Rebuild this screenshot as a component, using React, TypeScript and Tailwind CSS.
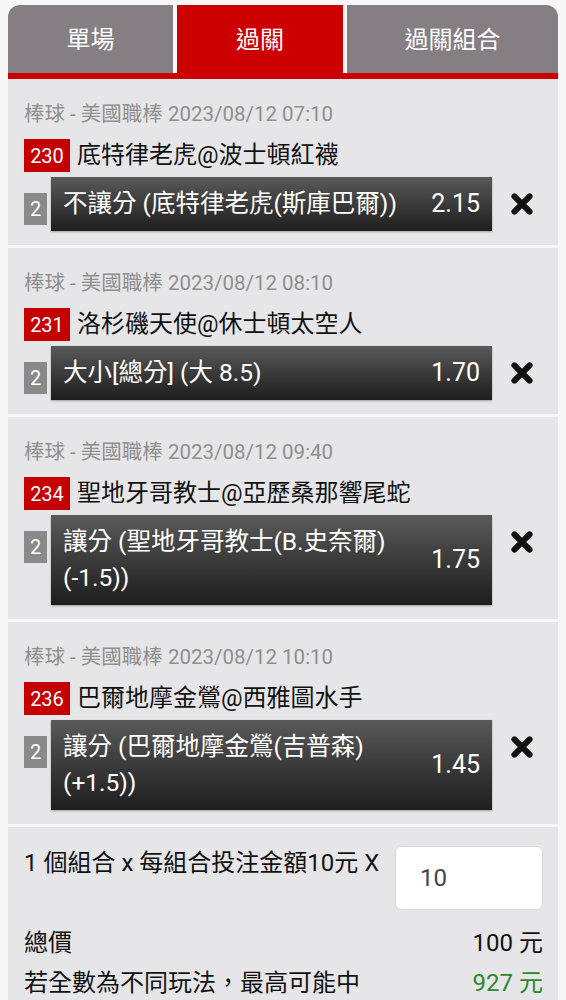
import React from "react";

type Bet = {
  meta: string;
  no: string;
  title: string;
  lines: string[];
  odds: string;
};

const bets: Bet[] = [
  {
    meta: "棒球 - 美國職棒 2023/08/12 07:10",
    no: "230",
    title: "底特律老虎@波士頓紅襪",
    lines: ["不讓分 (底特律老虎(斯庫巴爾))"],
    odds: "2.15",
  },
  {
    meta: "棒球 - 美國職棒 2023/08/12 08:10",
    no: "231",
    title: "洛杉磯天使@休士頓太空人",
    lines: ["大小[總分] (大 8.5)"],
    odds: "1.70",
  },
  {
    meta: "棒球 - 美國職棒 2023/08/12 09:40",
    no: "234",
    title: "聖地牙哥教士@亞歷桑那響尾蛇",
    lines: ["讓分 (聖地牙哥教士(B.史奈爾)", "(-1.5))"],
    odds: "1.75",
  },
  {
    meta: "棒球 - 美國職棒 2023/08/12 10:10",
    no: "236",
    title: "巴爾地摩金鶯@西雅圖水手",
    lines: ["讓分 (巴爾地摩金鶯(吉普森)", "(+1.5))"],
    odds: "1.45",
  },
];

function XIcon() {
  return (
    <svg width="26" height="26" viewBox="0 0 24 24" aria-hidden="true">
      <path
        d="M5 5 L19 19 M19 5 L5 19"
        stroke="#111"
        strokeWidth="5.5"
        strokeLinecap="round"
        fill="none"
      />
    </svg>
  );
}

function BetCard({ bet }: { bet: Bet }) {
  return (
    <div className="bg-[#e6e6e8] pl-4 pr-0 pt-[22px] pb-[14px]">
      <div className="text-[20.5px] leading-[26px] text-[#8f8f8f]">{bet.meta}</div>
      <div className="mt-[12px] flex items-center">
        <span className="flex h-[33px] w-[46px] items-center justify-center bg-[#c40000] text-[20px] text-white">
          {bet.no}
        </span>
        <span className="ml-[7px] text-[24px] leading-[33px] text-[#111]">{bet.title}</span>
      </div>
      <div className="mt-[5px] flex items-start">
        <span className="mt-[16px] flex h-[32px] w-[23px] items-center justify-center bg-[#8a8a8a] text-[20px] text-white">
          2
        </span>
        <div className="ml-[4px] flex w-[441px] items-center bg-linear-to-b from-[#5a5a5a] to-[#1e1e1e] px-3 py-[9px] text-white shadow-[0_1px_2px_rgba(0,0,0,0.3)]">
          <div className="flex-1 text-[24.5px] leading-[36px]">
            {bet.lines.map((l, i) => (
              <div key={i}>{l}</div>
            ))}
          </div>
          <div className="text-[25px] leading-[36px]">{bet.odds}</div>
        </div>
        <div className="flex h-[54px] flex-1 items-center justify-center pr-[6px]">
          <XIcon />
        </div>
      </div>
    </div>
  );
}

export default function App() {
  return (
    <div
      className="min-h-[1000px] bg-[#f7f7f7] pl-2 pr-2 pt-[5px]"
      style={{ fontFamily: "Roboto, 'Noto Sans CJK TC', 'Noto Sans', sans-serif" }}
    >
      <div className="flex gap-[4px]">
        <div className="flex h-[68px] w-[165px] items-center justify-center rounded-tl-[12px] bg-[#857e83] pt-[2px] text-[24px] text-white">
          單場
        </div>
        <div className="flex h-[68px] w-[166px] items-center justify-center bg-[#cc0000] pt-[2px] text-[24px] text-white">
          過關
        </div>
        <div className="flex h-[68px] flex-1 items-center justify-center rounded-tr-[12px] bg-[#857e83] pt-[2px] text-[24px] text-white">
          過關組合
        </div>
      </div>
      <div className="h-[6px] bg-[#cc0000]" />
      <div className="flex flex-col gap-[3px]">
        {bets.map((b) => (
          <BetCard key={b.no} bet={b} />
        ))}
        <div className="bg-[#e6e6e8] pb-4 pl-4 pr-[15px] pt-[19px] text-[24px] text-[#111]">
          <div className="flex items-start justify-between">
            <span className="pt-[1px] leading-[32px]">1 個組合 x 每組合投注金額10元 X</span>
            <input
              readOnly
              value="10"
              className="h-[64px] w-[148px] rounded-[6px] border border-[#d8d8d8] bg-white pl-6 text-[24px] text-[#444] outline-none"
            />
          </div>
          <div className="mt-[13px] flex justify-between leading-[40px]">
            <span>總價</span>
            <span>100 元</span>
          </div>
          <div className="flex justify-between leading-[40px]">
            <span>若全數為不同玩法，最高可能中</span>
            <span className="text-[#2b8a2b]">927 元</span>
          </div>
        </div>
      </div>
    </div>
  );
}
